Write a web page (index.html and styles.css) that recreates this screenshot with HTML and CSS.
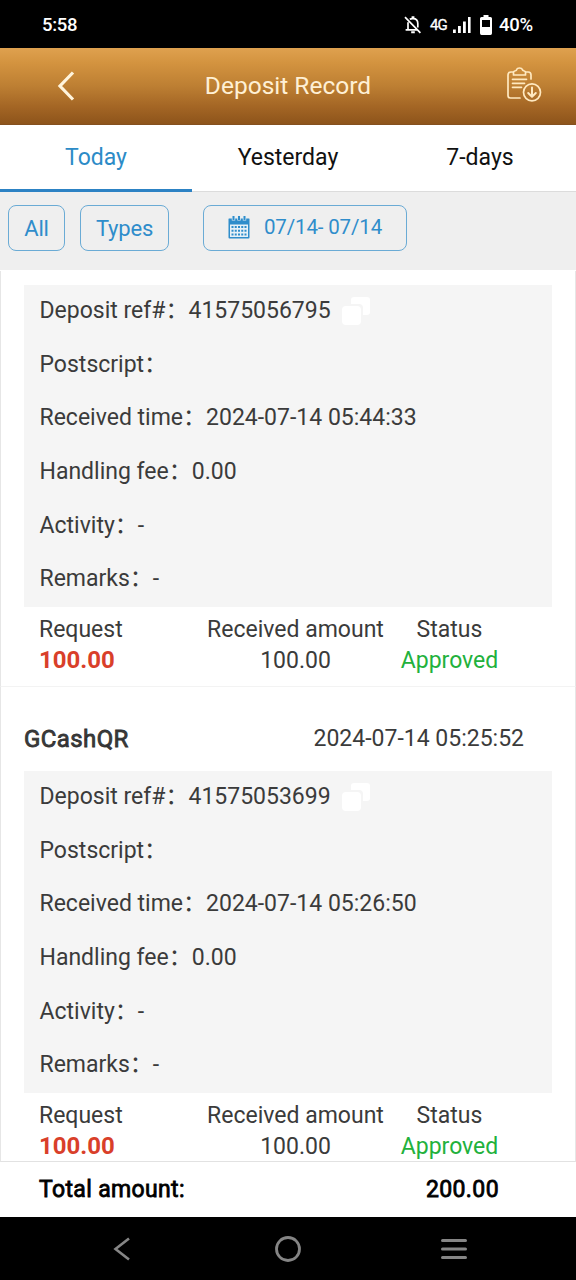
FILE: index.html
```html
<!DOCTYPE html>
<html lang="en">
<head>
<meta charset="utf-8">
<title>Deposit Record</title>
<link rel="stylesheet" href="styles.css">
</head>
<body>
<div class="screen">
  <div class="statusbar">
    <span class="clock">5:58</span>
    <div class="indicators">
      <svg class="bell" width="18" height="18" viewBox="0 0 18 18" fill="none" stroke="#fff" stroke-width="1.7"><path d="M1 1.2l15.4 15.6M4 6.2v7.3M1.6 13.9h11.800M5.8 3.3C7 2.5 7.6 2.6 9 2.6c3.2 0 4.8 2.2 4.8 4.9v4.1"/><path d="M7.6 1.2h2.8M7.2 16.3h3.6" stroke-width="2"/></svg>
      <span class="network">4G</span>
      <svg class="signal" width="18" height="16" viewBox="0 0 18 16" fill="#fff"><path d="M0 12.500h2.800V16H0zM5 9h2.800v7H5zM10 4.500h2.800V16H10zM15 0h2.600v16H15z"/></svg>
      <svg class="battery" width="12" height="20" viewBox="0 0 12 20"><path d="M3.500 0h5v2h2Q12 2 12 3.500v14.700Q12 20 10.500 20h-9Q0 20 0 18.200V3.500Q0 2 1.500 2h2z" fill="#fff"/><path d="M2 5h8v7H2z" fill="#000"/></svg>
      <span class="percent">40%</span>
    </div>
  </div>

  <header class="titlebar">
    <svg class="back" width="18" height="30" viewBox="0 0 18 30" fill="none" stroke="#fff4dc" stroke-width="3.200"><path d="M16 1.500L3 15 16 28.500"/></svg>
    <h1 class="title">Deposit Record</h1>
    <svg class="report" width="36" height="36" viewBox="0 0 36 36" fill="none" stroke="#ffe9c0" stroke-width="1.700" stroke-linecap="round" stroke-linejoin="round"><path d="M7.500 5H5Q2 5 2 8v20.500q0 2.500 2.500 2.500H14M20 5h2.200Q25 5 25 8v4M7.500 8V5.300q0-1 1.300-1.300 1.800-.3 2-1.700Q11.200 1 13.500 1t2.700 1.300q.3 1.400 2 1.700 1.300.3 1.300 1.300V8zM6.500 12.300h14M6.500 16.300h12M6.500 20.300h9"/><circle cx="26" cy="25.300" r="8.500"/><path d="M26 20.500v9M22.200 26l3.800 3.800 3.800-3.800" stroke-width="2"/></svg>
  </header>

  <nav class="tabs">
    <div class="tab active">Today</div>
    <div class="tab">Yesterday</div>
    <div class="tab">7-days</div>
  </nav>

  <div class="filters">
    <div class="chip all">All</div>
    <div class="chip types">Types</div>
    <div class="chip range">
      <svg width="22" height="23" viewBox="0 0 22 23"><path d="M1 2.500h20q.5 0 .5.500v18.500q0 1-1 1h-19q-1 0-1-1V3q0-.5.5-.5z" fill="#2f8dcb"/><path d="M2 8.500h18V21H2z" fill="#e7f1f7"/><path d="M5.500 0v4.500M11 0v4.500M16.500 0v4.500" stroke="#e4eef4" stroke-width="3.400"/><path d="M5.500 0v4M11 0v4M16.500 0v4" stroke="#2f8dcb" stroke-width="2"/><path d="M3.500 11h15M3.500 14.700h15M3.500 18.400h15" stroke="#2f8dcb" stroke-width="2" stroke-dasharray="2 1.250"/></svg>
      <span>07/14- 07/14</span>
    </div>
  </div>

  <main class="records">
    <section class="card first">
      <div class="details">
        <div class="row">Deposit ref#：41575056795<svg class="copy" width="30" height="29" viewBox="0 0 30 29" fill="#fff"><path d="M13 0h13q3 0 3 3v12q0 3-3 3h-4V11q0-4-4-4h-8V3q0-3 3-3z"/><rect x="1" y="9" width="19" height="19" rx="4"/></svg></div>
        <div class="row">Postscript：</div>
        <div class="row">Received time：2024-07-14 05:44:33</div>
        <div class="row">Handling fee：0.00</div>
        <div class="row">Activity：-</div>
        <div class="row">Remarks：-</div>
      </div>
      <div class="summary">
        <div class="request">Request<br><b>100.00</b></div>
        <div class="received">Received amount<br>100.00</div>
        <div class="status">Status<br><span class="approved">Approved</span></div>
      </div>
    </section>
    <section class="card second">
      <div class="heading"><span class="method">GCashQR</span><span class="time">2024-07-14 05:25:52</span></div>
      <div class="details">
        <div class="row">Deposit ref#：41575053699<svg class="copy" width="30" height="29" viewBox="0 0 30 29" fill="#fff"><path d="M13 0h13q3 0 3 3v12q0 3-3 3h-4V11q0-4-4-4h-8V3q0-3 3-3z"/><rect x="1" y="9" width="19" height="19" rx="4"/></svg></div>
        <div class="row">Postscript：</div>
        <div class="row">Received time：2024-07-14 05:26:50</div>
        <div class="row">Handling fee：0.00</div>
        <div class="row">Activity：-</div>
        <div class="row">Remarks：-</div>
      </div>
      <div class="summary">
        <div class="request">Request<br><b>100.00</b></div>
        <div class="received">Received amount<br>100.00</div>
        <div class="status">Status<br><span class="approved">Approved</span></div>
      </div>
    </section>
  </main>

  <footer class="total"><span class="label">Total amount:</span><span class="sum">200.00</span></footer>

  <div class="navbar">
    <svg width="18" height="24" viewBox="0 0 18 24" fill="none" stroke="#858585" stroke-width="2.600"><path d="M16 1.500L2.500 12 16 22.500"/></svg>
    <svg class="home" width="26" height="26" viewBox="0 0 26 26" fill="none" stroke="#858585" stroke-width="2.800"><circle cx="13" cy="13" r="11.500"/></svg>
    <svg width="26" height="20" viewBox="0 0 26 20" fill="none" stroke="#858585" stroke-width="3" stroke-linecap="round"><path d="M1.500 1.500h23M1.500 10h23M1.500 18.500h23"/></svg>
  </div>
</div>
</body>
</html>
```
FILE: styles.css
```css
* { box-sizing: border-box; }
body { margin: 0; background: #fff; font-family: Roboto, "Noto Sans CJK SC", sans-serif; font-size: 23px; color: #3b3b3b; }
svg { display: block; flex: none; }
.screen { width: 576px; height: 1280px; display: flex; flex-direction: column; overflow: hidden; }

.statusbar { height: 48px; flex: none; background: #000; color: #fff; display: flex; justify-content: space-between; align-items: center; padding: 2px 43px 0 42px; font-size: 18.500px; font-weight: 500; }
.clock { letter-spacing: -0.3px; }
.indicators { display: flex; align-items: center; }
.network { font-size: 15px; font-weight: 400; letter-spacing: -0.8px; margin: 0 6px 0 8px; -webkit-text-stroke: 0.3px #fff; }
.battery { margin: 0 7px 0 9px; }
.percent { letter-spacing: -0.2px; }

.titlebar { height: 77px; flex: none; display: grid; grid-template-columns: 148px 1fr 148px; align-items: center; background: linear-gradient(#dfa14f 0%, #d3933f 20%, #bd7f33 50%, #a36524 78%, #8d541b 100%); border-bottom: 1px solid #84501f; color: #fff0d5; }
.back { margin-left: 57px; }
.title { margin: 0; padding-bottom: 2px; font-size: 24.500px; font-weight: 400; text-align: center; }
.report { margin-left: 78px; margin-top: -3px; }

.tabs { height: 67px; flex: none; display: grid; grid-template-columns: repeat(3, 1fr); border-bottom: 1px solid #dcdcdc; color: #111; }
.tab { height: 67px; padding-bottom: 3px; display: flex; align-items: center; justify-content: center; border-bottom: 0 solid #2c82c4; }
.tab.active { color: #2c8bc7; border-bottom-width: 3px; padding-bottom: 0; }

.filters { height: 78px; flex: none; background: #efefef; padding: 13px 8px 0; display: flex; align-items: flex-start; color: #2f8dcb; }
.chip { height: 46px; border: 1px solid #6aabd5; border-radius: 8px; display: flex; align-items: center; justify-content: center; font-size: 22px; letter-spacing: -0.2px; }
.all { width: 57px; }
.types { width: 89px; margin-left: 15px; }
.range { width: 204px; margin-left: 34px; gap: 14px; font-size: 20.500px; letter-spacing: -0.15px; padding-bottom: 2px; }

.records { height: 892px; flex: none; overflow: hidden; padding-top: 1px; }
.card { border: solid #e6e6e6; border-width: 0 1px; padding: 0 23px; }
.first { height: 416px; padding-top: 14px; border-bottom: 1px solid #f3f3f3; }
.second { height: 475px; border-bottom: 1px solid #e2e2e2; }
.heading { height: 84px; padding: 19px 28px 0 0; display: flex; align-items: center; justify-content: space-between; }
.method { font-size: 24px; letter-spacing: 0.4px; -webkit-text-stroke: 0.8px #303030; }
.details { height: 322px; background: #f5f5f5; padding-left: 15.500px; }
.row { height: 53.700px; line-height: 52px; display: flex; align-items: flex-start; white-space: pre; }
.copy { margin: 12px 0 0 10px; }
.summary { display: grid; grid-template-columns: 168px 177px 1fr; padding: 7px 0 0 15px; line-height: 31px; }
.first .summary { padding-top: 7px; }
.request b { color: #d93f2a; font-size: 24px; line-height: 30px; }
.received { text-align: center; }
.status { text-align: center; width: 131px; }
.approved { color: #22b13c; }

.total { height: 55px; flex: none; display: flex; align-items: center; justify-content: space-between; padding: 0 77px 0 39px; color: #000; background: #fff; }
.label { letter-spacing: 0.35px; -webkit-text-stroke: 0.8px #000; }
.sum { letter-spacing: 0.4px; -webkit-text-stroke: 0.8px #000; }

.navbar { flex: 1; background: #000; display: grid; grid-template-columns: repeat(3, 166px); align-content: center; justify-content: center; align-items: center; justify-items: center; }
```
